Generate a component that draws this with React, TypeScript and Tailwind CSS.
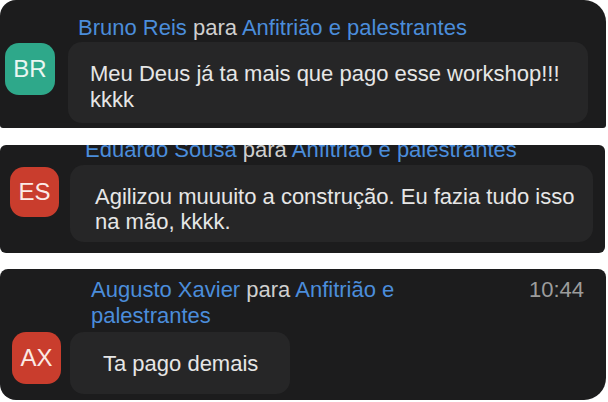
import React from 'react';

const blue = 'text-[#4b8ddb]';

function Header({ from, to }: { from: string; to: string }) {
  return (
    <>
      <span className={blue}>{from}</span>
      <span className="text-[#cfcfcf]"> para </span>
      <span className={blue}>{to}</span>
    </>
  );
}

export default function App() {
  return (
    <div className="w-[608px] h-[402px] bg-white flex flex-col overflow-hidden font-['Liberation_Sans',Arial,sans-serif] text-[22px]">
      {/* Bruno */}
      <div className="h-[128px] mr-[2px] bg-[#1c1c1d] rounded-tl-[16px] rounded-tr-[22px] rounded-b-[3px] flex flex-col pt-[15px] overflow-hidden">
        <div className="pl-[78px] leading-[26px] whitespace-nowrap">
          <Header from="Bruno Reis" to="Anfitrião e palestrantes" />
        </div>
        <div className="flex items-start mt-[1px]">
          <div className="ml-[5px] mt-[1px] w-[50px] h-[52px] rounded-[14px] bg-[#2ea88a] flex items-center justify-center text-[24px] text-[#eaf6f1]">
            BR
          </div>
          <div className="ml-[13px] w-[520px] rounded-[14px] bg-[#262627] pl-[22px] pt-[19px] pb-[10px] leading-[26px] text-[#e6e6e6] whitespace-nowrap">
            Meu Deus já ta mais que pago esse workshop!!!
            <br />
            kkkk
          </div>
        </div>
      </div>

      {/* Eduardo */}
      <div className="h-[108px] mt-[17px] mr-[3px] bg-[#1c1c1d] rounded-[6px] flex flex-col overflow-hidden">
        <div className="pl-[85px] leading-[26px] -mt-[8px] whitespace-nowrap">
          <Header from="Eduardo Sousa" to="Anfitrião e palestrantes" />
        </div>
        <div className="flex items-start mt-[2px]">
          <div className="ml-[10px] mt-[2px] w-[49px] h-[50px] rounded-[14px] bg-[#c93d2d] flex items-center justify-center text-[24px] text-[#fbeae6]">
            ES
          </div>
          <div className="ml-[11px] w-[523px] rounded-[14px] bg-[#262627] pl-[25px] pt-[19px] pb-[8px] leading-[25px] text-[#e6e6e6] whitespace-nowrap">
            Agilizou muuuito a construção. Eu fazia tudo isso
            <br />
            na mão, kkkk.
          </div>
        </div>
      </div>

      {/* Augusto */}
      <div className="h-[131px] mt-[16px] mr-[2px] bg-[#1c1c1d] rounded-t-[8px] rounded-bl-[16px] rounded-br-[22px] flex flex-col pt-[8px] overflow-hidden">
        <div className="flex items-start">
          <div className="ml-[91px] w-[360px] leading-[26px]">
            <Header from="Augusto Xavier" to="Anfitrião e palestrantes" />
          </div>
          <div className="ml-auto mr-[22px] leading-[26px] text-[#9c9c9c]">10:44</div>
        </div>
        <div className="flex items-start mt-[3px]">
          <div className="ml-[12px] w-[49px] h-[52px] rounded-[14px] bg-[#c93d2d] flex items-center justify-center text-[24px] text-[#fbeae6]">
            AX
          </div>
          <div className="ml-[9px] w-[220px] h-[62px] rounded-[14px] bg-[#262627] pl-[33px] flex items-center text-[#e6e6e6]">
            Ta pago demais
          </div>
        </div>
      </div>
    </div>
  );
}
